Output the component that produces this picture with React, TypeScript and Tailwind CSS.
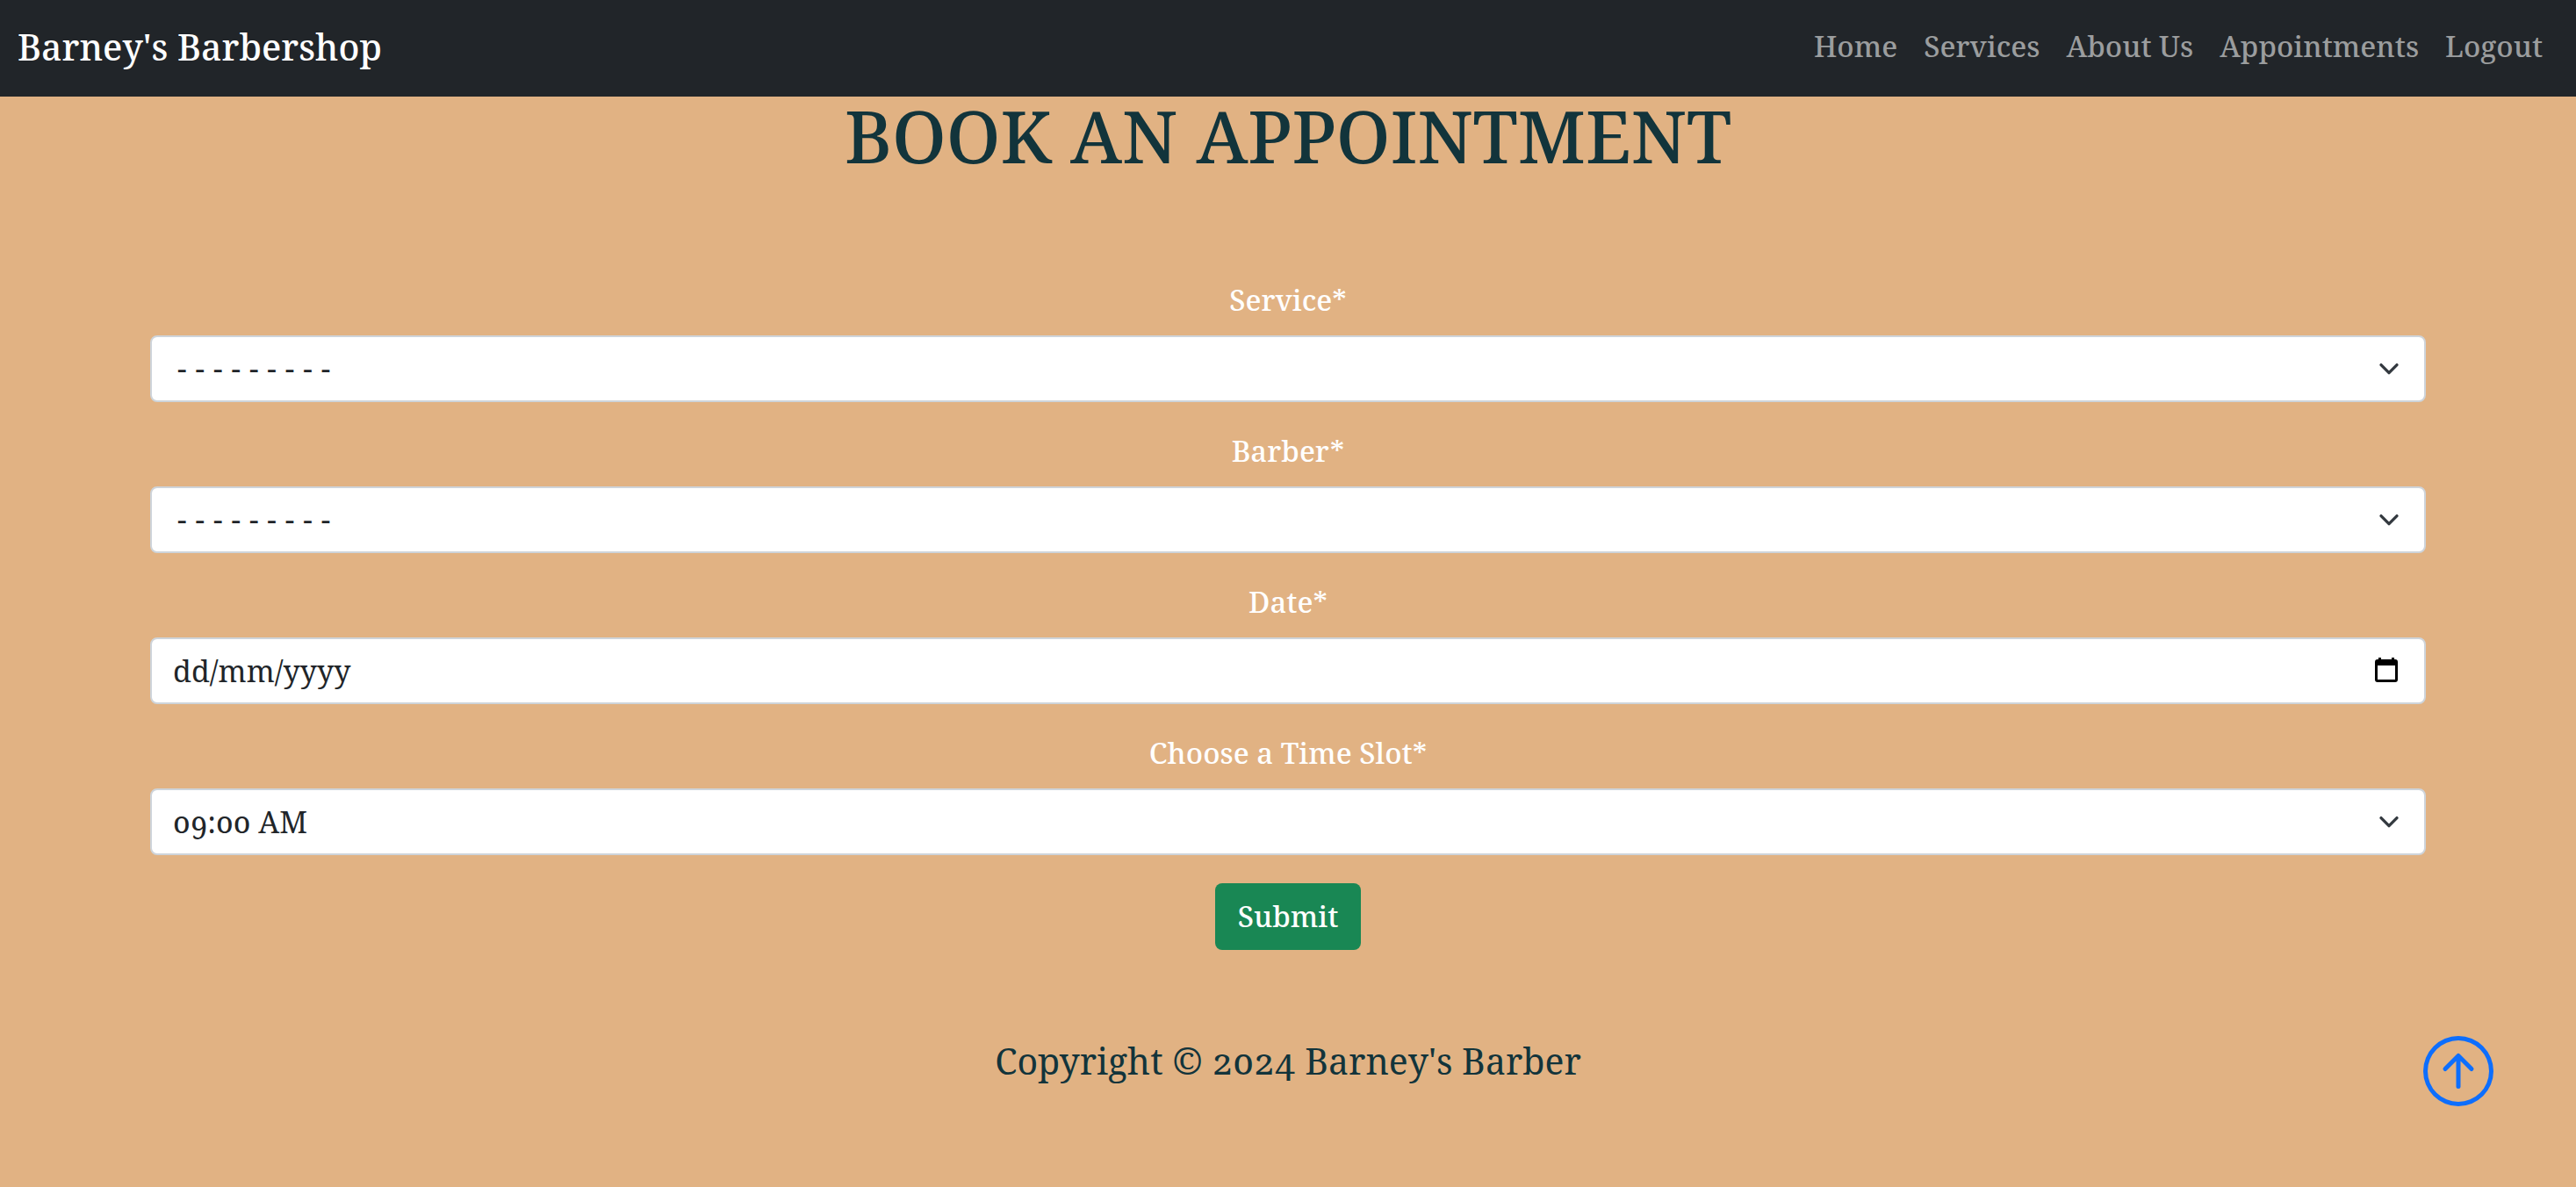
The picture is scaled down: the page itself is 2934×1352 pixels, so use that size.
import type { ReactNode } from "react";

const navLinks = ["Home", "Services", "About Us", "Appointments", "Logout"];

const timeSlots = ["09:00 AM", "10:00 AM", "11:00 AM", "12:00 PM", "01:00 PM", "02:00 PM", "03:00 PM", "04:00 PM"];

const controlClass =
  "block h-[76px] w-full appearance-none rounded-lg border-2 border-[#ced4da] bg-white px-6 text-[34px] leading-[48px] text-[#212529] outline-none";

function Field({ id, label, children }: { id: string; label: string; children: ReactNode }) {
  return (
    <div className="mb-8">
      <label htmlFor={id} className="mb-4 block text-center text-[33px] leading-[48px] font-medium text-white">
        {label}*
      </label>
      <div className="relative">{children}</div>
    </div>
  );
}

function Chevron() {
  return (
    <svg
      className="pointer-events-none absolute top-[22px] right-[26px] size-8"
      viewBox="0 0 16 16"
      fill="none"
      stroke="#343a40"
      strokeWidth="1.7"
      strokeLinecap="round"
      strokeLinejoin="round"
      aria-hidden="true"
    >
      <path d="M3.5 5.8l4.5 4.5 4.5-4.5" />
    </svg>
  );
}

function SelectField({ id, label, options, mono }: { id: string; label: string; options: string[]; mono?: boolean }) {
  return (
    <Field id={id} label={label}>
      <select
        id={id}
        className={mono ? `${controlClass} font-['DejaVu_Sans_Mono',monospace]` : controlClass}
      >
        {options.map((o) => (
          <option key={o}>{o}</option>
        ))}
      </select>
      <Chevron />
    </Field>
  );
}

function CalendarIcon() {
  return (
    <svg className="h-7 w-[26px]" viewBox="0 0 26 28" aria-hidden="true">
      <path
        fill="#000"
        fillRule="evenodd"
        d="M4 0h3v2h12V0h3v2h1a3 3 0 0 1 3 3v20a3 3 0 0 1-3 3H3a3 3 0 0 1-3-3V5a3 3 0 0 1 3-3h1zM3 9v16h20V9z"
      />
    </svg>
  );
}

export default function App() {
  return (
    <div className="min-h-screen bg-[#e1b283] font-['Noto_Serif','DejaVu_Serif',serif] text-[#12343b] oldstyle-nums">
      <nav className="flex h-[110px] items-center justify-between bg-[#212529] pr-[38px] pb-1 pl-5">
        <a href="#" className="text-[41px] leading-[60px] font-medium text-white">
          Barney's Barbershop
        </a>
        <ul className="flex gap-[30px]">
          {navLinks.map((link) => (
            <li key={link}>
              <a href="#" className="text-[33px] leading-[48px] font-medium text-[#9b9d9e]">
                {link}
              </a>
            </li>
          ))}
        </ul>
      </nav>

      <main className="mx-auto max-w-[2640px] px-6">
        <h1 className="text-center text-[82px] leading-[88px] font-medium">BOOK AN APPOINTMENT</h1>
        <form className="mt-30" onSubmit={(e) => e.preventDefault()}>
          <SelectField id="service" label="Service" options={["---------"]} mono />
          <SelectField id="barber" label="Barber" options={["---------"]} mono />
          <Field id="date" label="Date">
            <input
              id="date"
              type="text"
              placeholder="dd/mm/yyyy"
              className={`${controlClass} placeholder:text-[#212529] placeholder:opacity-100`}
            />
            <button type="button" aria-label="Open calendar" className="absolute top-[23px] right-8">
              <CalendarIcon />
            </button>
          </Field>
          <SelectField id="slot" label="Choose a Time Slot" options={timeSlots} />
          <div className="text-center">
            <button
              type="submit"
              className="h-[76px] rounded-lg bg-[#198754] px-[26px] text-[33px] leading-[48px] font-medium text-white"
            >
              Submit
            </button>
          </div>
        </form>
      </main>

      <footer className="mt-24 text-center">
        <p className="text-[41px] leading-[60px]">Copyright © 2024 Barney's Barber</p>
      </footer>

      <a href="#" aria-label="Back to top" className="fixed right-[94px] bottom-[92px]">
        <svg className="size-20" viewBox="0 0 16 16" fill="#0d6efd" aria-hidden="true">
          <path
            fillRule="evenodd"
            d="M1 8a7 7 0 1 0 14 0A7 7 0 0 0 1 8m15 0A8 8 0 1 1 0 8a8 8 0 0 1 16 0m-7.5 3.5a.5.5 0 0 1-1 0V5.707L5.354 7.854a.5.5 0 1 1-.708-.708l3-3a.5.5 0 0 1 .708 0l3 3a.5.5 0 0 1-.708.708L8.5 5.707z"
          />
        </svg>
      </a>
    </div>
  );
}
